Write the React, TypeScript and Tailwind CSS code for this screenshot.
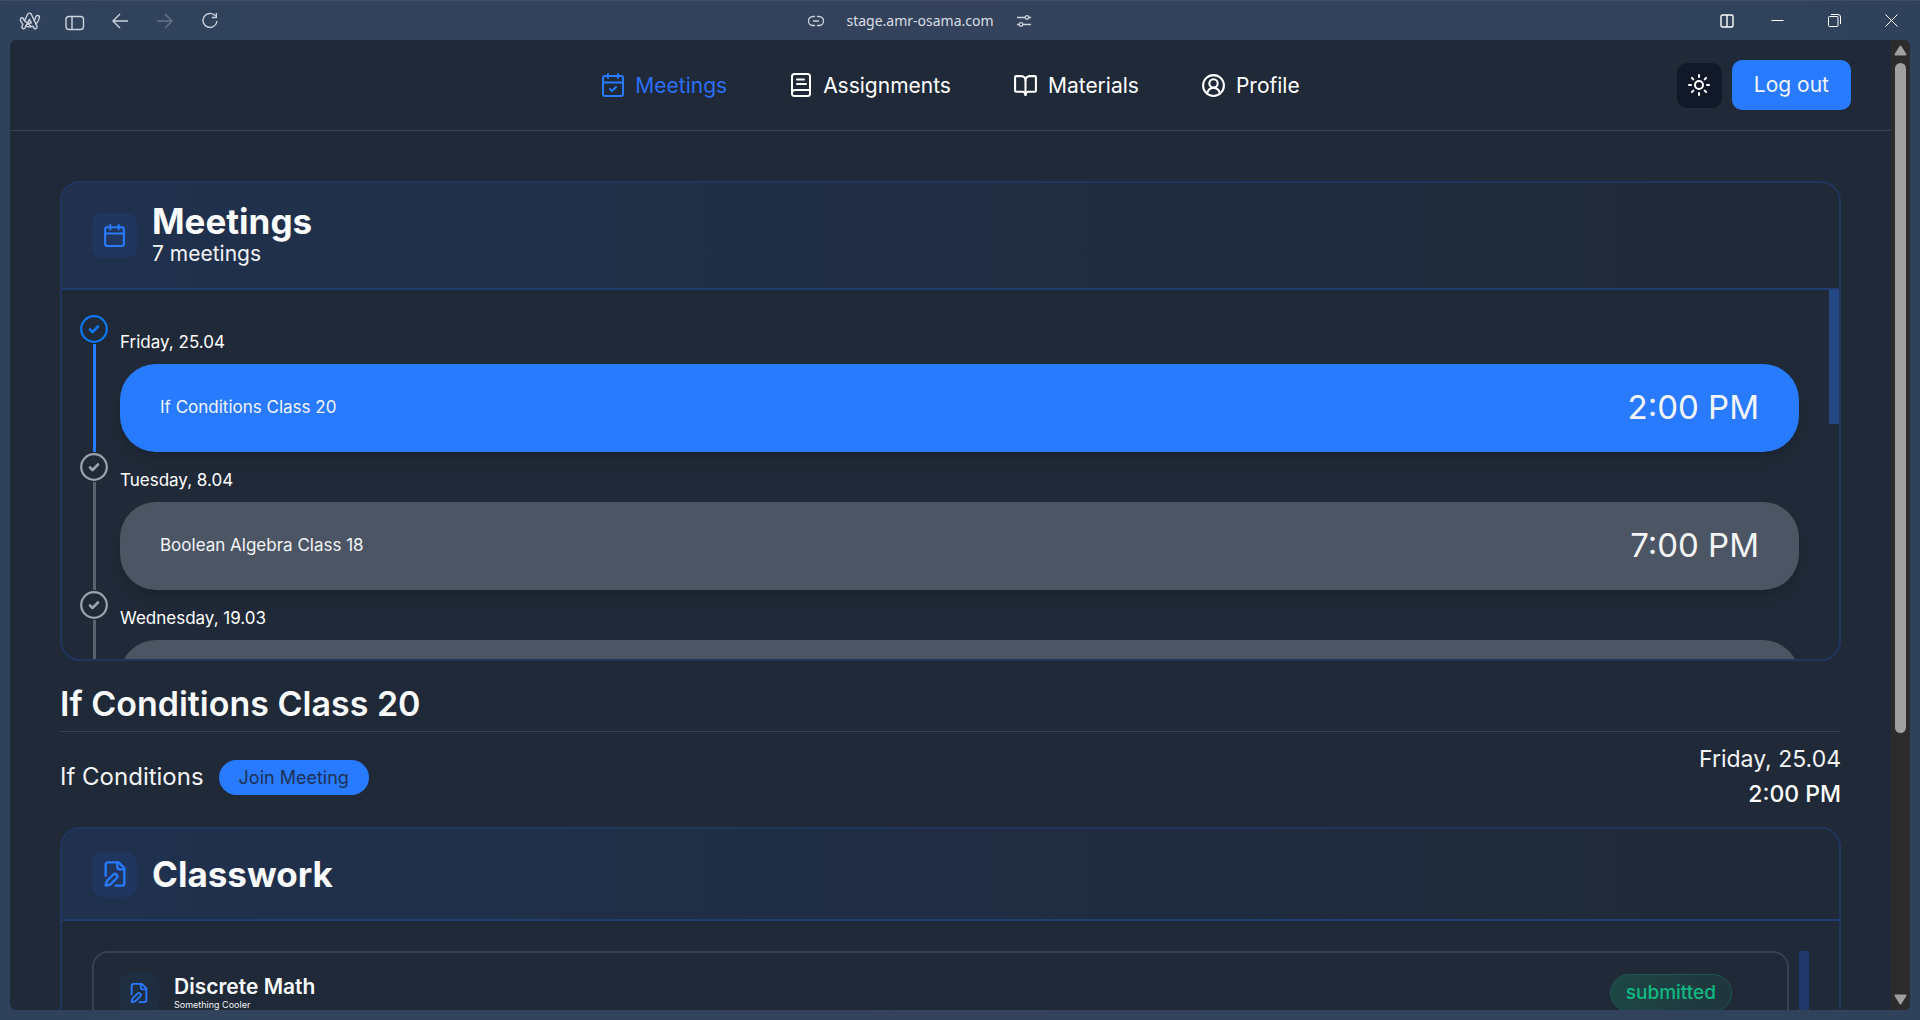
import React from "react";
import { Calendar, CircleUserRound, BookOpen, Sun } from "lucide-react";

const navText = "text-[21px] leading-none";

function ArcLogo() {
  return (
    <svg viewBox="0 0 22 18" className="h-[18px] w-[22px]" fill="none" stroke="currentColor" strokeWidth="1.4" strokeLinejoin="round" strokeLinecap="round">
      <path d="M8.6 2.2C9.3.7 11.5.7 12.3 2.2L18 14.3C18.7 16.6 15.700 17.6 14.7 15.6L14 14.2C11.5 15.3 8.8 15 6.8 14.2L6.2 15.6C5.200 17.6 2.2 16.5 2.9 14.3L3.9 12.2C2.6 11 1.7 9.5 1.4 7.9C1.1 5.5 4 5 4.6 7C4.8 7.7 5.1 8.3 5.6 8.8Z" />
      <path d="M15.2 8.5C16 7.5 16.5 6.3 16.7 5C17.2 2.6 20.7 3.1 20.4 5.500C20 8 18.7 10.2 16.9 12" />
      <path d="M10.4 7.3L8.6 10.9C9.8 11.3 11.1 11.3 12.3 10.9ZM5.6 8.8L12.3 14.5M8.6 10.9L6.8 14.2" />
    </svg>
  );
}

function CalendarCheck() {
  return (
    <svg viewBox="0 0 24 24" className="size-6 text-[#287bff]" fill="none" stroke="currentColor" strokeWidth="2" strokeLinecap="round" strokeLinejoin="round">
      <path d="M7 1v4M17 1v4M2 9.500h20M9 16l2 2 4-4" />
      <rect x="2" y="3" width="20" height="20" rx="2" />
    </svg>
  );
}

function Notebook() {
  return (
    <svg viewBox="0 0 24 24" className="size-6" fill="none" stroke="currentColor" strokeWidth="2" strokeLinecap="round" strokeLinejoin="round">
      <rect x="3" y="1" width="18" height="22" rx="2.500" />
      <path d="M3 20a3 3 0 0 1 3-3h15M8 6.500h7M8 11h9" />
    </svg>
  );
}

function FilePen({ className }: { className: string }) {
  return (
    <svg viewBox="0 0 24 24" className={className} fill="none" stroke="currentColor" strokeWidth="2" strokeLinecap="round" strokeLinejoin="round">
      <path d="M12.500 22H18a2 2 0 0 0 2-2V7l-5-5H6a2 2 0 0 0-2 2v9.500" />
      <path d="M14 2v4a2 2 0 0 0 2 2h4" />
      <path d="M13.378 15.626a1 1 0 1 0-3.004-3.004l-5.010 5.012a2 2 0 0 0-.506.854l-.837 2.870a.5.5 0 0 0 .620.620l2.870-.837a2 2 0 0 0 .854-.506z" />
    </svg>
  );
}

function BrowserBar() {
  return (
    <div className="grid h-[39px] shrink-0 grid-cols-[1fr_auto_1fr] items-center text-[#cdd3dd]">
      <div className="flex items-center pl-[19px]">
        <button aria-label="Arc" className="flex"><ArcLogo /></button>
        <button aria-label="Toggle sidebar" className="ml-6 flex">
          <svg viewBox="0 0 20 16" className="mt-1 h-4 w-5" fill="none" stroke="currentColor" strokeWidth="1.4"><rect x="1" y="1.5" width="17.5" height="13" rx="3" /><path d="M7 1.500v13" /></svg>
        </button>
        <button aria-label="Back" className="ml-[26px] flex">
          <svg viewBox="0 0 18 16" className="h-4 w-[18px]" fill="none" stroke="currentColor" strokeWidth="1.4"><path d="M17 8H2M9 1L2 8l7 7" /></svg>
        </button>
        <button aria-label="Forward" className="ml-[27px] flex text-[#66758b]">
          <svg viewBox="0 0 18 16" className="h-4 w-[18px]" fill="none" stroke="currentColor" strokeWidth="1.4"><path d="M1 8h15M9 1l7 7-7 7" /></svg>
        </button>
        <button aria-label="Reload" className="ml-[27px] flex">
          <svg viewBox="0 0 18 18" className="size-[18px]" fill="none" stroke="currentColor" strokeWidth="1.4"><path d="M14.2 3.700A7 7 0 1 0 16 9M15.300 1v4.500h-4.500" /></svg>
        </button>
      </div>
      <div className="flex items-center pr-20">
        <svg viewBox="0 0 16 12" className="h-3 w-4" fill="none" stroke="currentColor" strokeWidth="1.3" strokeLinecap="round"><path d="M6.500 1.500H5a4.200 4.200 0 0 0 0 9h1.500M9.500 1.500H11a4.200 4.200 0 0 1 0 9H9.500M5.500 6h5" /></svg>
        <span className="mx-[22px] font-['Noto_Sans',sans-serif] text-sm text-[#d9dee6]">stage.amr-osama.com</span>
        <svg viewBox="0 0 16 14" className="h-[14px] w-4" fill="none" stroke="currentColor" strokeWidth="1.3"><path d="M1 3.500h8M13 3.500h2M1 10.500h2M7 10.500h8" /><circle cx="11" cy="3.5" r="1.8" /><circle cx="5" cy="10.5" r="1.8" /></svg>
      </div>
      <div className="flex items-center justify-end pr-[22px] text-white">
        <button aria-label="Split view" className="flex">
          <svg viewBox="0 0 14 14" className="size-[14px]" fill="none" stroke="currentColor" strokeWidth="1.4"><rect x="1" y="1" width="12" height="12" rx="1.5" /><path d="M7 1v12" /></svg>
        </button>
        <button aria-label="Minimize" className="ml-[37px] flex">
          <svg viewBox="0 0 13 13" className="size-[13px]" stroke="currentColor"><path d="M.5 6.500h12" /></svg>
        </button>
        <button aria-label="Restore" className="ml-11 flex">
          <svg viewBox="0 0 13 13" className="size-[13px]" fill="none" stroke="currentColor"><rect x=".5" y="2.5" width="9.5" height="10" rx="1" /><path d="M3 .5h7a2.500 2.500 0 0 1 2.500 2.500v7" /></svg>
        </button>
        <button aria-label="Close" className="ml-11 flex">
          <svg viewBox="0 0 13 13" className="size-[13px]" stroke="currentColor"><path d="M.5.5l12 12M12.500.5l-12 12" /></svg>
        </button>
      </div>
    </div>
  );
}

function SiteHeader() {
  return (
    <header className="grid shrink-0 grid-cols-[1fr_auto_1fr] items-center border-b border-[#37414f] px-10 py-5">
      <span />
      <nav className="flex items-center gap-[62px] text-white">
        <a href="#meetings" className="flex items-center gap-[10px] text-[#2b6ff5]"><CalendarCheck /><span className={navText}>Meetings</span></a>
        <a href="#assignments" className="flex items-center gap-[10px]"><Notebook /><span className={navText}>Assignments</span></a>
        <a href="#materials" className="flex items-center gap-[10px]"><BookOpen className="size-[25px]" /><span className={navText}>Materials</span></a>
        <a href="#profile" className="flex items-center gap-[10px]"><CircleUserRound className="size-[25px]" /><span className={navText}>Profile</span></a>
      </nav>
      <div className="flex items-center justify-end gap-[10px]">
        <button aria-label="Toggle theme" className="flex size-[45px] items-center justify-center rounded-[10px] bg-[#111827] text-white"><Sun className="size-6" /></button>
        <button className="h-[50px] rounded-[10px] bg-[#287bff] px-[22px] text-[21px] text-[#f3f4f6]">Log out</button>
      </div>
    </header>
  );
}

function CardHeader({ icon, title, subtitle }: { icon: React.ReactNode; title: string; subtitle?: string }) {
  return (
    <div className="flex items-center gap-[15px] border-b-2 border-[#213c6f] bg-linear-to-r from-[#20314e] to-[#1f2937] px-[30px] py-[18px]">
      <div className="flex size-[45px] items-center justify-center rounded-[10px] bg-[#20365f] text-[#287bff]">{icon}</div>
      <div className="flex min-h-[54px] flex-col justify-center">
        <h2 className="text-[35px] leading-[41px] font-bold text-[#f9fafb]">{title}</h2>
        {subtitle && <p className="pb-1 text-[21px] leading-6 text-[#f3f4f6]">{subtitle}</p>}
      </div>
    </div>
  );
}

const meetings = [
  { date: "Friday, 25.04", title: "If Conditions Class 20", time: "2:00 PM", active: true },
  { date: "Tuesday, 8.04", title: "Boolean Algebra Class 18", time: "7:00 PM", active: false },
  { date: "Wednesday, 19.03", title: "", time: "", active: false },
];

function MeetingRow({ date, title, time, active }: (typeof meetings)[number]) {
  return (
    <li className="flex gap-3">
      <div className={`flex w-7 flex-col items-center gap-px pt-px ${active ? "text-[#0d78f2]" : "text-[#9ca3af]"}`}>
        <svg viewBox="0 0 28 28" className="size-7 shrink-0" fill="none" stroke="currentColor" strokeWidth="2.2"><circle cx="14" cy="14" r="12.8" /><path d="M10 14.500l2.500 2.500 5.500-5.500" strokeWidth="2.6" strokeLinecap="round" strokeLinejoin="round" /></svg>
        <div className={`w-[3px] flex-1 ${active ? "bg-[#287bff]" : "bg-[#59616e]"}`} />
      </div>
      <div className="flex-1">
        <p className="pt-4 pb-[10px] text-[17px] leading-6 text-white">{date}</p>
        <button aria-label={date} className={`flex h-[88px] w-full items-center justify-between rounded-[36px] px-10 text-[#f3f4f6] shadow-lg ${active ? "bg-[#287bff]" : "bg-[#4b5563]"}`}>
          <span className="text-[17px]">{title}</span>
          <span className="text-[33px]">{time}</span>
        </button>
      </div>
    </li>
  );
}

function PageScrollbar() {
  return (
    <div className="flex w-[19px] shrink-0 flex-col items-center bg-[#2c2c2c] py-[5px] text-[#9f9f9f]">
      <svg viewBox="0 0 13 11" className="h-[11px] w-[13px]"><path d="M6.500 1.500L11.500 9.500H1.500Z" fill="currentColor" stroke="currentColor" strokeWidth="2" strokeLinejoin="round" /></svg>
      <div className="mt-[7px] flex w-full flex-1 flex-col items-center">
        <div className="h-[72%] w-[11px] rounded-full bg-[#9f9f9f]" />
      </div>
      <svg viewBox="0 0 13 11" className="h-[11px] w-[13px]"><path d="M6.500 9.500L11.500 1.500H1.500Z" fill="currentColor" stroke="currentColor" strokeWidth="2" strokeLinejoin="round" /></svg>
    </div>
  );
}

export default function App() {
  return (
    <div className="flex h-screen flex-col overflow-hidden border-t border-[#414d69] bg-linear-to-r from-[#30425b] via-[#34425c] to-[#30425b] font-['Inter',sans-serif]">
      <BrowserBar />
      <div className="mx-[10px] mb-[10px] flex min-h-0 flex-1 overflow-hidden rounded-md bg-[#1f2937]">
        <div className="flex min-w-0 flex-1 flex-col overflow-hidden">
          <SiteHeader />
          <main className="flex-1 shrink-0 px-[50px] pt-[50px]">
            <section className="flex h-[480px] flex-col overflow-hidden rounded-[20px] border-2 border-[#20365f] bg-[#1f2937]">
              <CardHeader icon={<Calendar className="size-[25px]" />} title="Meetings" subtitle="7 meetings" />
              <div className="flex min-h-0 flex-1 items-start overflow-hidden">
                <ul className="flex-1 pt-6 pr-[30px] pl-[18px]">
                  {meetings.map((m) => <MeetingRow key={m.date} {...m} />)}
                </ul>
                <div className="h-[134px] w-[10px] bg-[#234884]" />
              </div>
            </section>

            <section>
              <h2 className="border-b border-[#37414f] pt-[18px] pb-[3px] text-[34px] leading-[49px] font-semibold text-[#f9fafb]">If Conditions Class 20</h2>
              <div className="flex items-center justify-between pt-[10px] pb-[15px] text-[#f3f4f6]">
                <div className="flex items-center gap-[15px]">
                  <p className="text-[24px]">If Conditions</p>
                  <button className="h-[35px] rounded-full bg-[#287bff] px-5 text-[18px] text-[#1f3052]">Join Meeting</button>
                </div>
                <div className="text-right text-[23px] leading-[35px]">
                  <p>Friday, 25.04</p>
                  <p className="font-medium text-white">2:00 PM</p>
                </div>
              </div>
            </section>

            <section className="overflow-hidden rounded-[20px] border-2 border-[#20365f] bg-[#1f2937]">
              <CardHeader icon={<FilePen className="size-7" />} title="Classwork" />
              <div className="flex items-start gap-[10px] p-[30px]">
                <article className="flex flex-1 items-center justify-between rounded-2xl border-2 border-[#374151] py-5 pr-[55px] pl-[25px]">
                  <div className="flex items-center gap-[15px]">
                    <div className="flex size-10 items-center justify-center rounded-[10px] bg-[#1f2d41] text-[#287bff]"><FilePen className="size-[22px]" /></div>
                    <div>
                      <h3 className="text-[21px] leading-6 font-semibold text-[#f9fafb]">Discrete Math</h3>
                      <p className="text-[9px] leading-3 text-[#f3f4f6]">Something Cooler</p>
                    </div>
                  </div>
                  <span className="rounded-full border border-[#1d5750] bg-linear-to-r from-[#1d4745] to-[#1f353d] px-[15px] py-1 text-[19px] font-medium text-[#10b981]">submitted</span>
                </article>
                <div className="h-[134px] w-[10px] bg-[#20386a]" />
              </div>
            </section>
          </main>
        </div>
        <PageScrollbar />
      </div>
    </div>
  );
}
